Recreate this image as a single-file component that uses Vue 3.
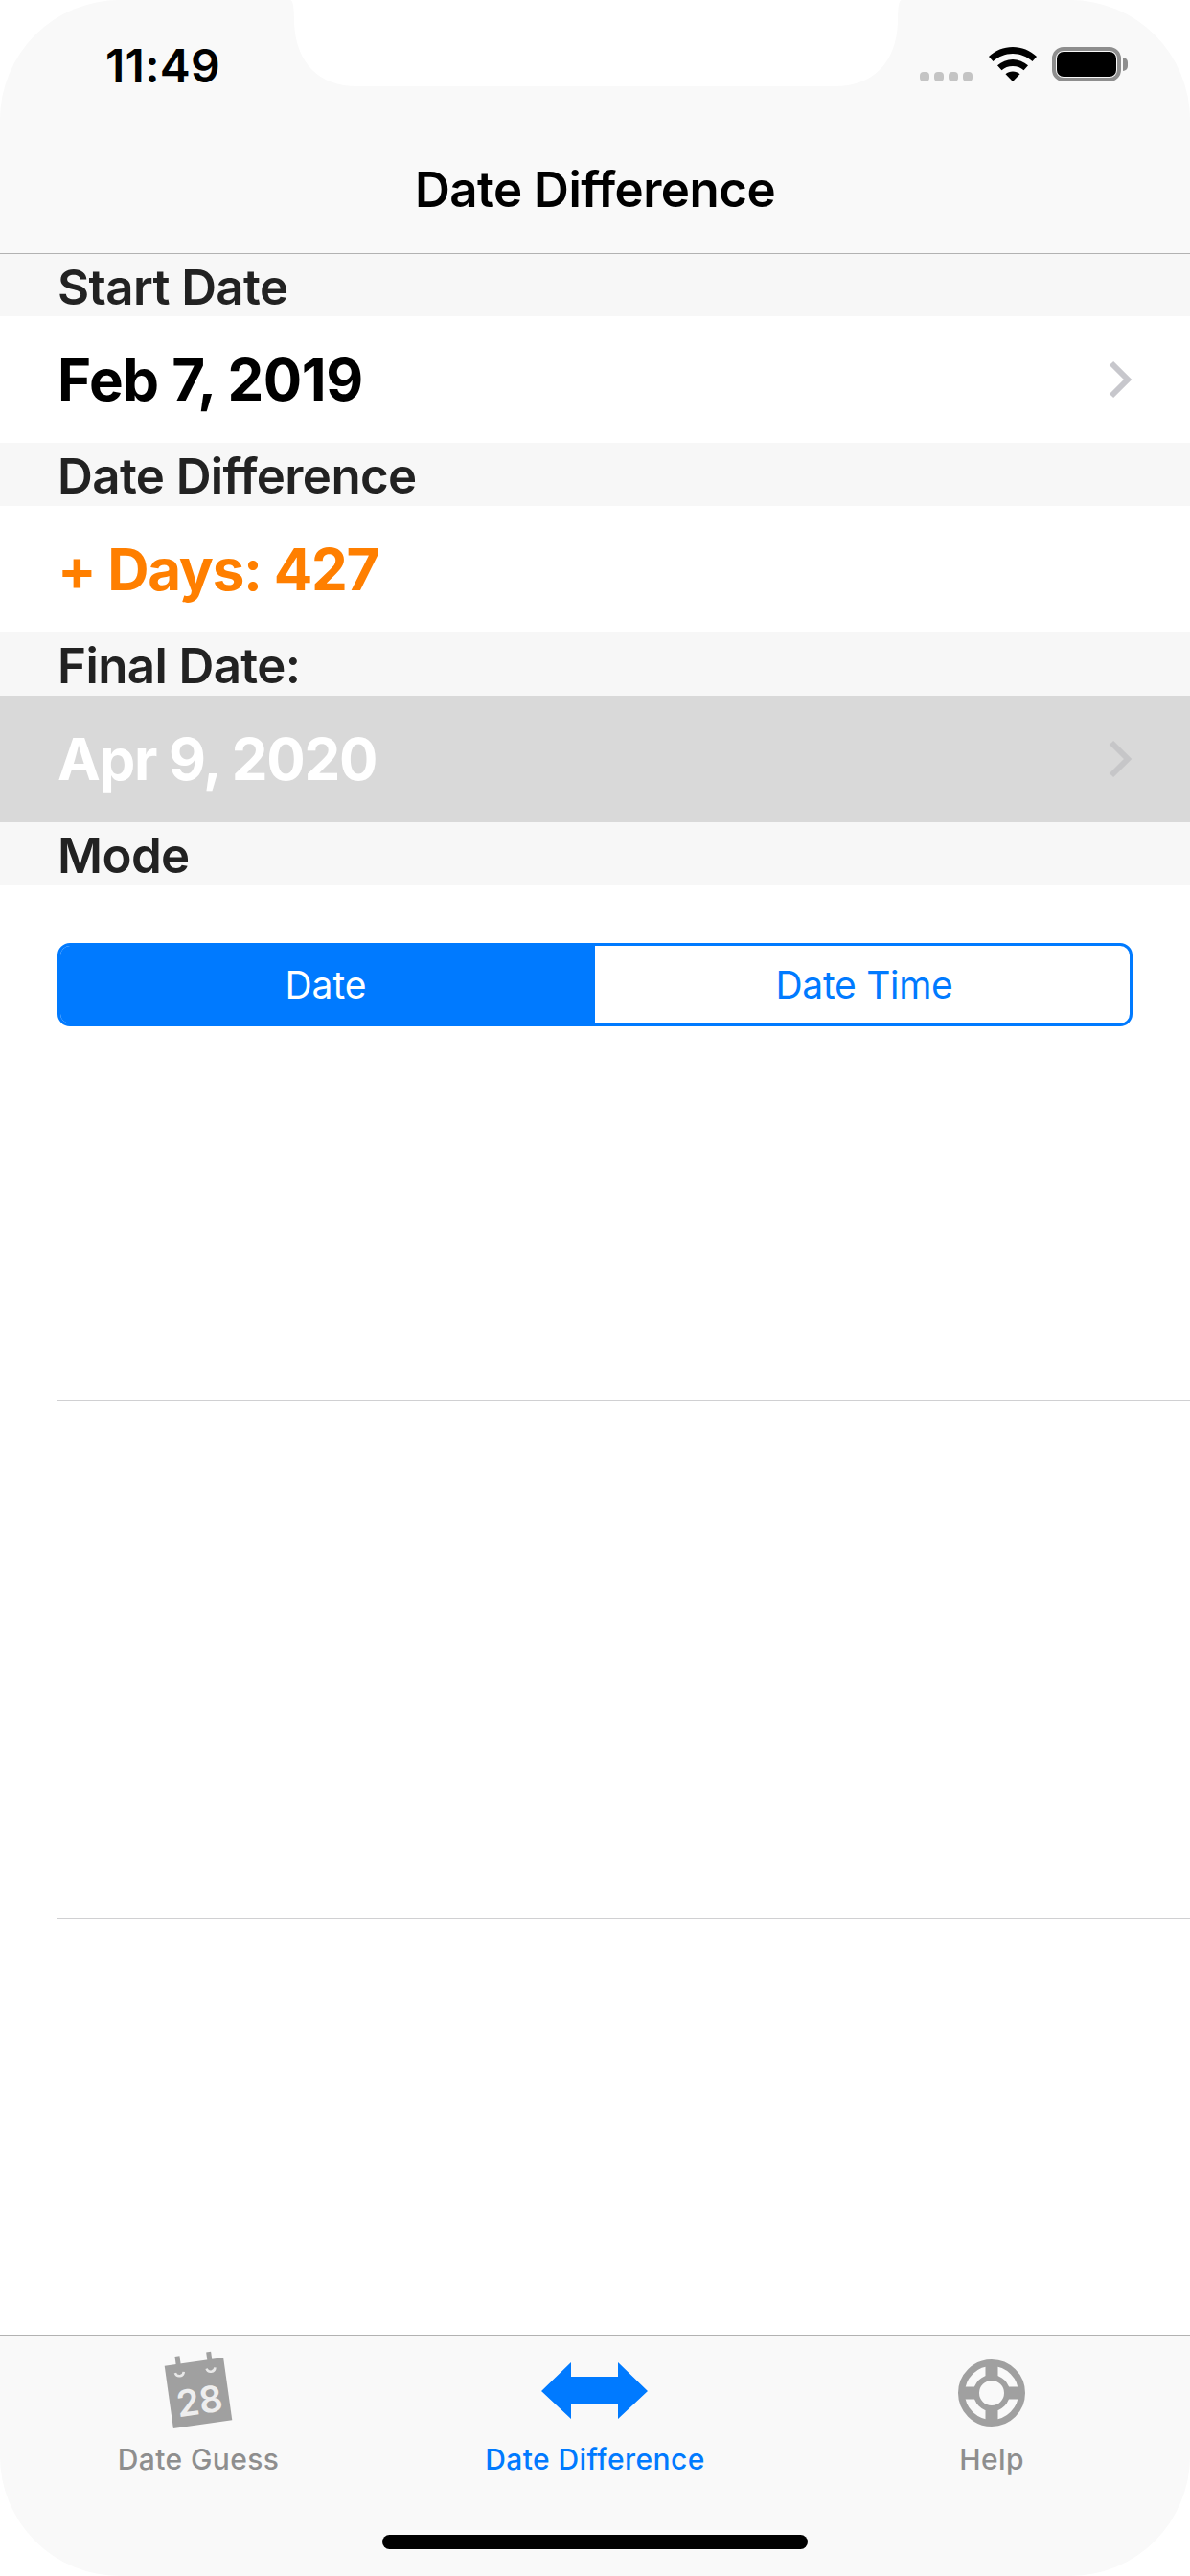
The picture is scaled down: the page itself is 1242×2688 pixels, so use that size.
<script setup>
const sections = [
  { label: 'Start Date', value: 'Feb 7, 2019', kind: 'plain', chevron: true },
  { label: 'Date Difference', value: '+ Days: 427', kind: 'orange', chevron: false },
  { label: 'Final Date:', value: 'Apr 9, 2020', kind: 'selected', chevron: true },
]
</script>

<template>
  <div class="screen">
    <header class="top">
      <div class="status">
        <span class="time">11:49</span>
        <div class="status-icons">
          <div class="dots"><i></i><i></i><i></i><i></i></div>
          <svg class="wifi" width="50" height="36" viewBox="0 0 50 36">
            <path d="M25 0C15.5 0 7 3.600 0 10L4.500 15C10 10 17 7 25 7S40 10 45.500 15L50 10C43 3.600 34.500 0 25 0Z" />
            <path d="M25 13C19 13 13.500 15.300 9 19.300L13.500 24.300C16.500 21.500 20.500 20 25 20S33.500 21.500 36.500 24.300L41 19.300C36.500 15.300 31 13 25 13Z" />
            <path d="M25 25.500C22 25.500 19.600 26.500 17.500 28.300L25 36L32.500 28.300C30.400 26.500 28 25.500 25 25.500Z" />
          </svg>
          <div class="battery"><span class="charge"></span><span class="nub"></span></div>
        </div>
      </div>
      <div class="title">Date Difference</div>
    </header>

    <section v-for="s in sections" :key="s.label">
      <div class="sec-head">{{ s.label }}</div>
      <div class="row" :class="s.kind">
        <span>{{ s.value }}</span>
        <svg v-if="s.chevron" class="chevron" width="26" height="40" viewBox="0 0 26 40">
          <path d="M4 3L21 20L4 37" fill="none" stroke-width="6" />
        </svg>
      </div>
    </section>

    <div class="sec-head">Mode</div>
    <div class="list">
      <div class="cell first">
        <div class="segment">
          <div class="seg on">Date</div>
          <div class="seg">Date Time</div>
        </div>
      </div>
      <div class="cell"></div>
    </div>

    <nav class="tabbar">
      <div class="tabs">
        <div class="tab">
          <svg width="76" height="86" viewBox="0 0 76 86">
            <g transform="rotate(-8 38 45)">
              <rect x="7" y="12" width="62" height="66" fill="#a0a0a0" />
              <rect x="19" y="4" width="5" height="16" fill="#a0a0a0" />
              <rect x="52" y="4" width="5" height="16" fill="#a0a0a0" />
              <path d="M17 21C18 26 25 26 26 21M50 21C51 26 58 26 59 21" fill="none" stroke="#e8e8e8" stroke-width="2.500" />
              <text x="38" y="67" text-anchor="middle" class="cal-num">28</text>
            </g>
          </svg>
          <span class="tab-label">Date Guess</span>
        </div>
        <div class="tab active">
          <svg width="112" height="86" viewBox="0 0 112 86">
            <path d="M0 30L31 0V15H80V0L111 30L80 59V44H31V59Z" transform="translate(0 13)" fill="#007aff" />
          </svg>
          <span class="tab-label">Date Difference</span>
        </div>
        <div class="tab">
          <svg width="72" height="86" viewBox="0 0 72 86">
            <g transform="translate(36 45)">
              <circle r="31.500" fill="none" stroke="#a0a0a0" stroke-width="7" />
              <circle r="16" fill="none" stroke="#a0a0a0" stroke-width="6" />
              <path d="M-6.500 -31H6.500V-16H-6.500ZM-6.500 16H6.500V31H-6.500ZM-31 -6.500H-16V6.500H-31ZM16 -6.500H31V6.500H16Z" fill="#a0a0a0" />
            </g>
          </svg>
          <span class="tab-label">Help</span>
        </div>
      </div>
      <div class="home"></div>
    </nav>

    <svg class="notch" width="638" height="90" viewBox="0 0 638 90">
      <path d="M0 0C3 0 4 8 4 24C6 66 30 90 70 90H568C608 90 632 66 634 24C634 8 635 0 638 0Z" fill="#fff" />
    </svg>
  </div>
</template>

<style scoped>
.screen {
  position: relative;
  width: 1242px;
  height: 2688px;
  display: flex;
  flex-direction: column;
  overflow: hidden;
  border-radius: 125px;
  background: #fff;
  font-family: Inter, "Liberation Sans", sans-serif;
  color: #000;
}

.top {
  height: 264px;
  flex: none;
  background: #f9f9f9;
  border-bottom: 1px solid #b2b2b2;
  box-sizing: content-box;
}

.status {
  height: 166px;
  display: flex;
  justify-content: space-between;
  padding: 36px 65px 0 110px;
  box-sizing: border-box;
}

.time {
  font-size: 48px;
  line-height: 66px;
  font-weight: 600;
  letter-spacing: 0.300px;
}

.status-icons {
  display: flex;
  align-items: flex-start;
  padding-top: 13px;
}

.dots {
  display: flex;
  gap: 5px;
  margin-top: 26px;
  margin-right: 17px;
}

.dots i {
  width: 10px;
  height: 10px;
  border-radius: 4px;
  background: #c4c4c4;
}

.wifi {
  fill: #000;
  margin-right: 16px;
}

.battery {
  position: relative;
  width: 72px;
  height: 36px;
  box-sizing: border-box;
  border: 4px solid #8e8e8e;
  border-radius: 12px;
  padding: 1px;
  margin-right: 7px;
}

.charge {
  display: block;
  height: 100%;
  border-radius: 7px;
  background: #000;
}

.nub {
  position: absolute;
  right: -11px;
  top: 7px;
  width: 5px;
  height: 14px;
  border-radius: 0 7px 7px 0;
  background: #8e8e8e;
}

.title {
  text-align: center;
  font-size: 51px;
  line-height: 64px;
  font-weight: 600;
  letter-spacing: -0.500px;
}

.sec-head {
  height: 66px;
  flex: none;
  padding-left: 60px;
  background: #f7f7f7;
  color: #222;
  font-size: 51px;
  line-height: 70px;
  font-weight: 600;
  letter-spacing: -0.600px;
}

section:first-of-type .sec-head {
  height: 65px;
}

.row {
  height: 132px;
  display: flex;
  align-items: center;
  justify-content: space-between;
  padding: 0 60px;
  background: #fff;
  font-size: 60px;
  font-weight: 700;
  letter-spacing: -1.300px;
}

.plain {
  letter-spacing: -0.500px;
}

.orange {
  color: #ff7f00;
}

.selected {
  background: #d9d9d9;
  color: #fff;
}

.chevron {
  stroke: #c7c7cc;
}

.selected .chevron {
  stroke: #c6c6c8;
}

.list {
  flex: 1;
  display: flex;
  flex-direction: column;
  background: #fff;
}

.cell {
  flex: 1;
  margin-left: 60px;
}

.cell.first {
  flex: none;
  height: 538px;
  padding-top: 60px;
  padding-right: 60px;
  box-sizing: border-box;
  border-bottom: 1px solid #d0d0d2;
}

.cell:nth-child(2) {
  flex: none;
  height: 539px;
  border-bottom: 1px solid #d0d0d2;
}

.segment {
  height: 87px;
  display: flex;
  box-sizing: border-box;
  border: 3px solid #007aff;
  border-radius: 13px;
  overflow: hidden;
}

.seg {
  flex: 1;
  display: flex;
  align-items: center;
  justify-content: center;
  color: #007aff;
  font-size: 39px;
  letter-spacing: -0.300px;
  padding-left: 4px;
}

.seg.on {
  background: #007aff;
  color: #fff;
  padding-left: 0;
  padding-right: 4px;
  letter-spacing: 0;
}

.tabbar {
  height: 250px;
  flex: none;
  display: flex;
  flex-direction: column;
  align-items: center;
  background: #f9f9f9;
  border-top: 1px solid #b2b2b2;
}

.tabs {
  width: 100%;
  display: grid;
  grid-template-columns: 414px 414px 414px;
  padding-top: 14px;
}

.tab {
  display: flex;
  flex-direction: column;
  align-items: center;
  color: #8e8e8e;
}

.tab.active {
  color: #007aff;
}

.tab-label {
  font-size: 30px;
  line-height: 36px;
  font-weight: 500;
  margin-top: 10px;
  letter-spacing: 0.400px;
}

.cal-num {
  font-family: Inter, sans-serif;
  font-size: 38px;
  font-weight: 600;
  fill: #eeeeee;
}

.home {
  width: 444px;
  height: 15px;
  margin-top: 61px;
  border-radius: 8px;
  background: #000;
}

.notch {
  position: absolute;
  top: 0;
  left: 303px;
}
</style>
